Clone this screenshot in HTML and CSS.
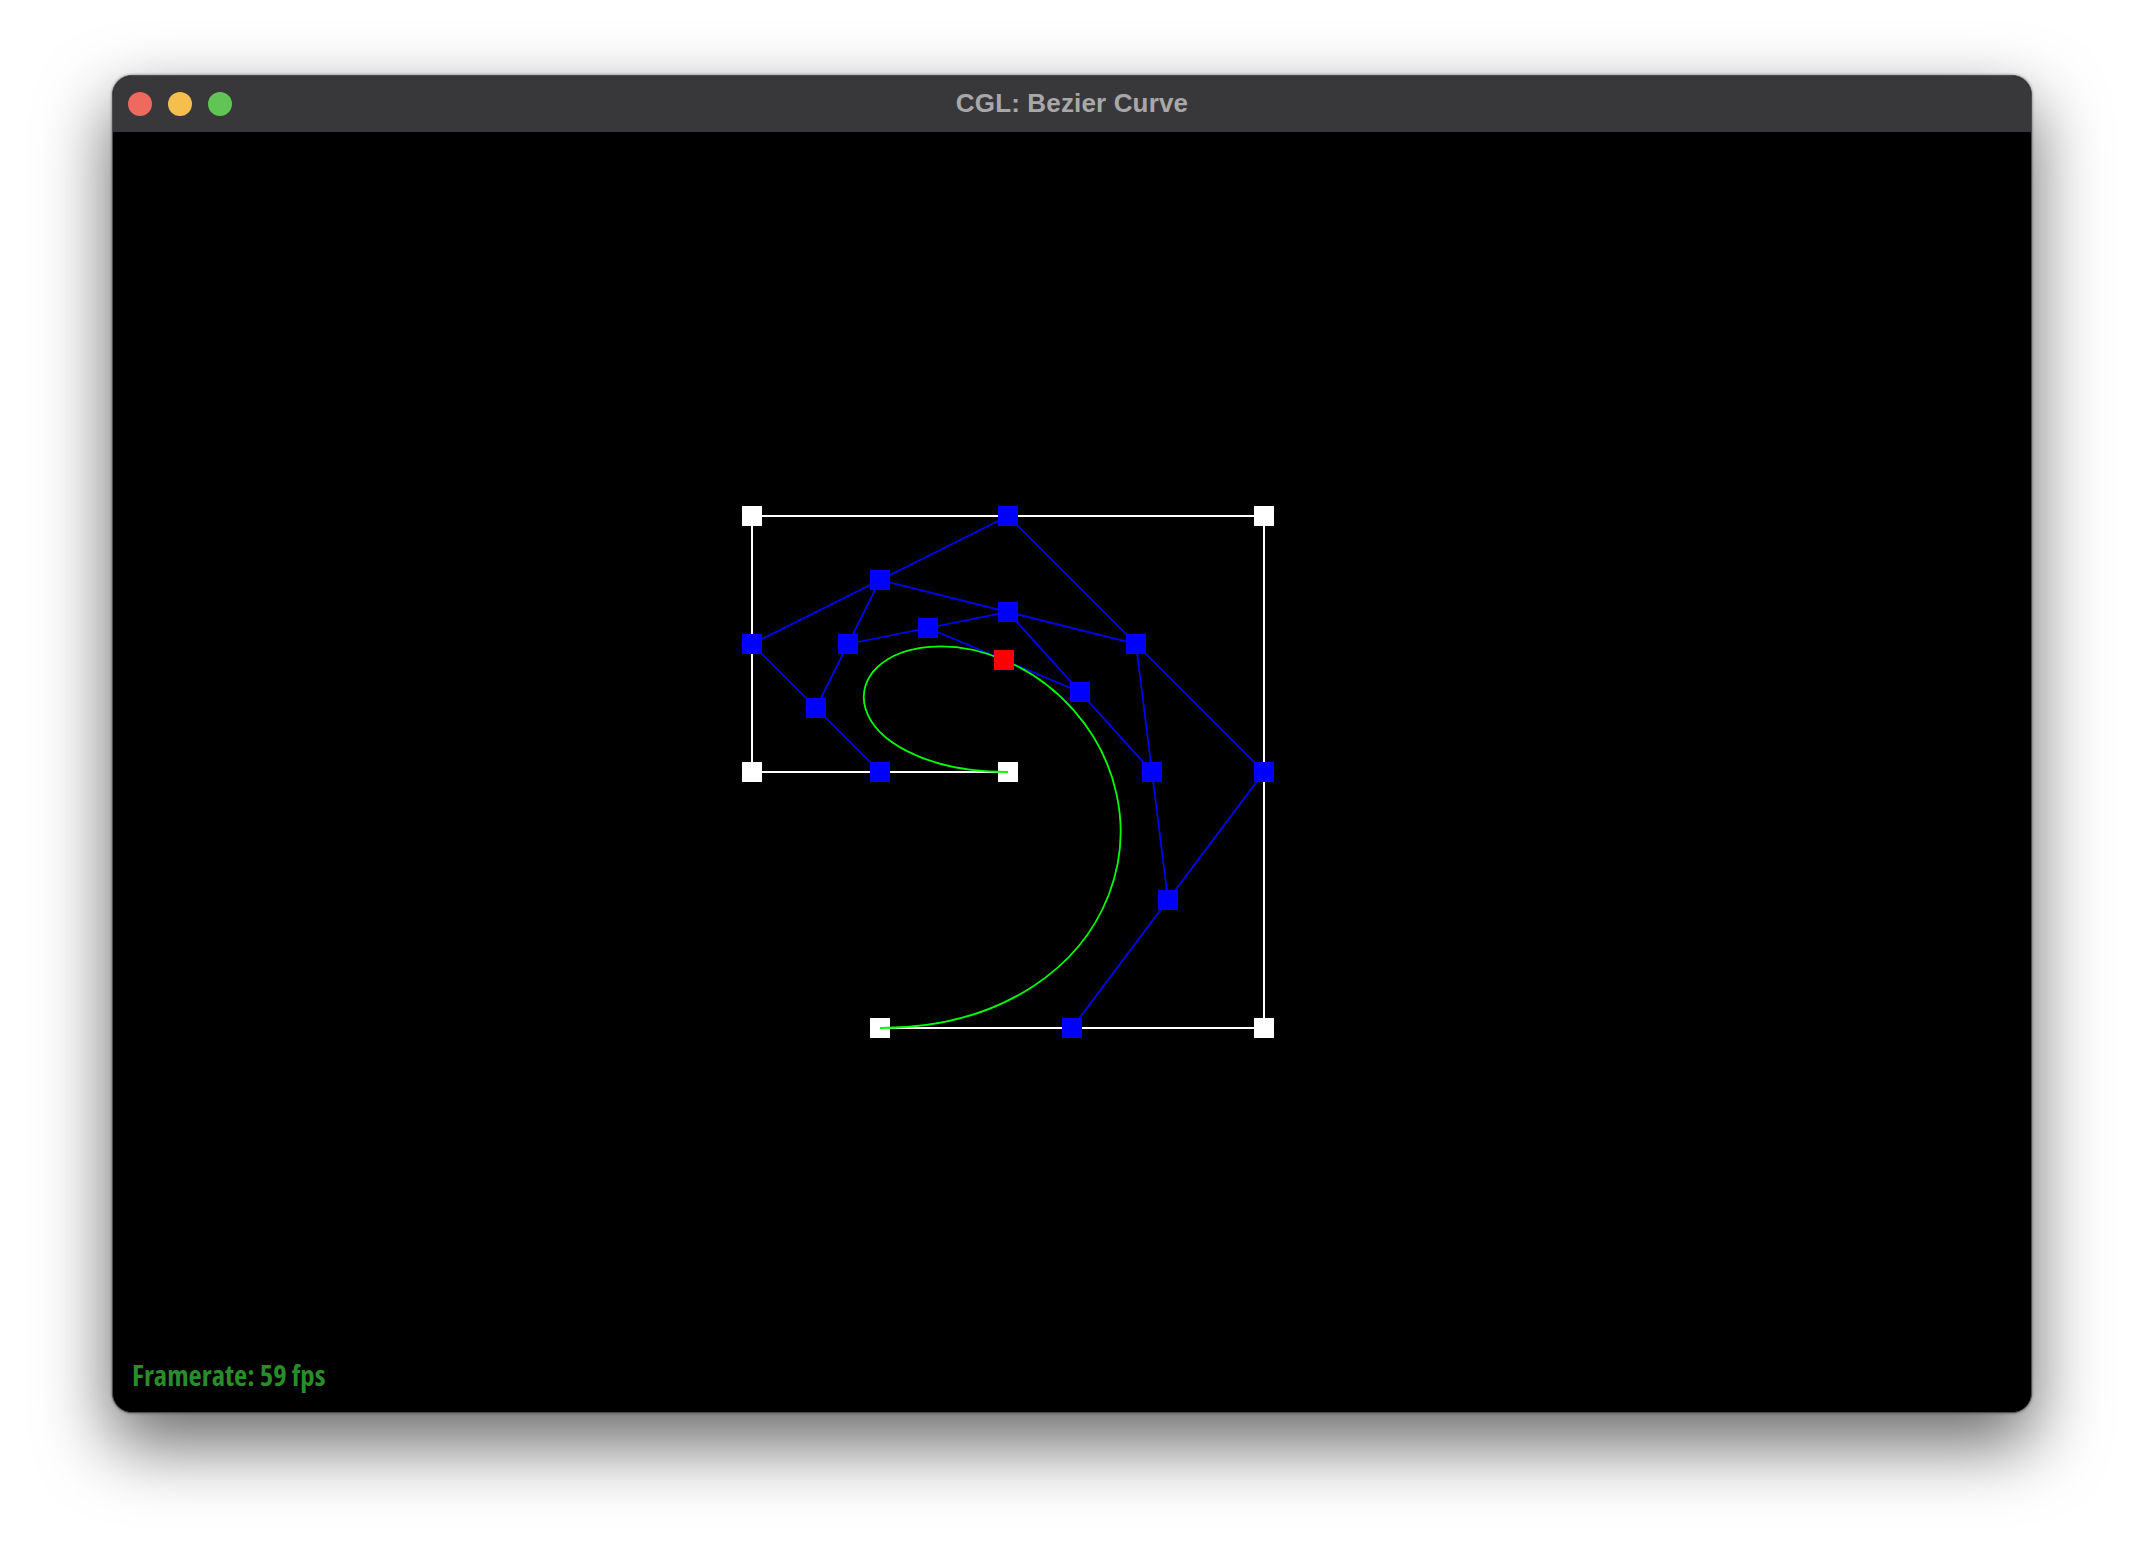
FILE: index.html
```html
<!DOCTYPE html>
<html lang="en">
<head>
<meta charset="utf-8">
<title>CGL: Bezier Curve</title>
<link rel="stylesheet" href="styles.css">
</head>
<body>
<div class="window">
  <div class="titlebar">
    <div class="lights">
      <span class="light close"></span>
      <span class="light minimize"></span>
      <span class="light zoom"></span>
    </div>
    <div class="title">CGL: Bezier Curve</div>
  </div>
  <div class="canvas">
    <svg class="scene" width="1918" height="1280" viewBox="1 0 1918 1280" xmlns="http://www.w3.org/2000/svg">
      <polyline class="ctrl-line" points="896,640 640,640 640,384 1152,384 1152,896 768,896"/>
      <g class="level-lines">
        <polyline points="768,640 640,512 896,384 1152,640 960,896"/>
        <polyline points="704,576 768,448 1024,512 1056,768"/>
        <polyline points="736,512 896,480 1040,640"/>
        <polyline points="816,496 968,560"/>
      </g>
      <g class="ctrl-pts">
        <rect x="886" y="630" width="20" height="20"/>
        <rect x="630" y="630" width="20" height="20"/>
        <rect x="630" y="374" width="20" height="20"/>
        <rect x="1142" y="374" width="20" height="20"/>
        <rect x="1142" y="886" width="20" height="20"/>
        <rect x="758" y="886" width="20" height="20"/>
      </g>
      <g class="level-pts">
        <rect x="758" y="630" width="20" height="20"/>
        <rect x="630" y="502" width="20" height="20"/>
        <rect x="886" y="374" width="20" height="20"/>
        <rect x="1142" y="630" width="20" height="20"/>
        <rect x="950" y="886" width="20" height="20"/>
        <rect x="694" y="566" width="20" height="20"/>
        <rect x="758" y="438" width="20" height="20"/>
        <rect x="1014" y="502" width="20" height="20"/>
        <rect x="1046" y="758" width="20" height="20"/>
        <rect x="726" y="502" width="20" height="20"/>
        <rect x="886" y="470" width="20" height="20"/>
        <rect x="1030" y="630" width="20" height="20"/>
        <rect x="806" y="486" width="20" height="20"/>
        <rect x="958" y="550" width="20" height="20"/>
      </g>
      <path class="curve" d="M896 640 C853.33 640 819.40 631.52 795.54 619.38 C771.69 607.25 757.89 591.48 753.42 576.18 C748.95 560.89 753.77 546.09 765.59 534.98 C777.41 523.87 796.18 516.46 818.50 514.83 C840.83 513.19 866.67 517.33 892 528 C917.33 538.67 942.13 555.87 962.23 578.81 C982.34 601.75 997.72 630.43 1004.59 662.33 C1011.46 694.23 1009.78 729.35 996.60 763.21 C983.43 797.07 958.72 829.68 920.87 854.41 C883.02 879.14 832 896 768 896"/>
      <rect class="eval-pt" x="882" y="518" width="20" height="20"/>
    </svg>
    <div class="framerate">Framerate: 59 fps</div>
  </div>
</div>
</body>
</html>
```
FILE: styles.css
```css
html, body {
  margin: 0;
  padding: 0;
}

body {
  background: #ffffff;
  width: 2144px;
  height: 1560px;
  overflow: hidden;
  padding: 75px 0 0 112px;
  box-sizing: border-box;
}

.window {
  width: 1920px;
  box-sizing: border-box;
  border: 1px solid #4e4e50;
  border-radius: 20px;
  overflow: hidden;
  background: #000;
  box-shadow: 0 30px 70px 2px rgba(0, 0, 0, 0.58), 0 0 3px rgba(0, 0, 0, 0.5);
}

.titlebar {
  position: relative;
  height: 56px;
  background: #38383a;
  display: flex;
  align-items: center;
  justify-content: center;
}

.lights {
  position: absolute;
  left: 15px;
  top: 16px;
  display: flex;
  gap: 16px;
}

.light {
  width: 24px;
  height: 24px;
  border-radius: 50%;
  display: block;
}

.close { background: #ee6a5f; }
.minimize { background: #f5bf4f; }
.zoom { background: #61c555; }

.title {
  font-family: "Liberation Sans", Arial, sans-serif;
  font-weight: 700;
  font-size: 26px;
  letter-spacing: 0.15px;
  line-height: 56px;
  color: #a8a8aa;
  margin-top: -2px;
}

.canvas {
  position: relative;
  width: 1918px;
  height: 1280px;
  background: #000;
}

.scene {
  display: block;
}

.ctrl-line {
  fill: none;
  stroke: #ffffff;
  stroke-width: 2;
}

.level-lines polyline {
  fill: none;
  stroke: #0000ff;
  stroke-width: 1.7;
}

.ctrl-pts rect { fill: #ffffff; }
.level-pts rect { fill: #0000ff; }
.eval-pt { fill: #ff0000; }

.curve {
  fill: none;
  stroke: #00ff00;
  stroke-width: 1.8;
}

.framerate {
  position: absolute;
  left: 19px;
  top: 1228px;
  font-family: "Open Sans", "DejaVu Sans", sans-serif;
  font-weight: 700;
  font-stretch: 75%;
  font-size: 28.7px;
  line-height: 29px;
  color: #2a8c2a;
  white-space: nowrap;
}
```
